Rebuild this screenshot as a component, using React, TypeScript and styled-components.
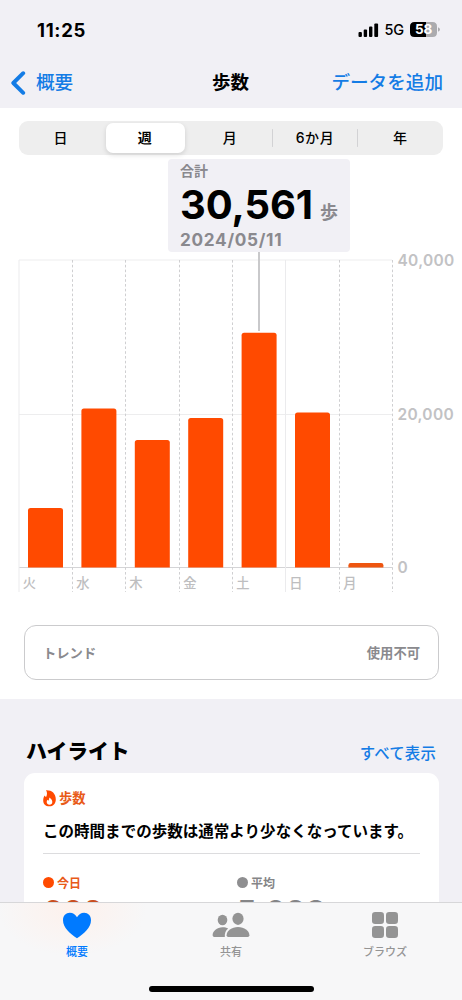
import React from 'react';
import styled, { createGlobalStyle } from 'styled-components';

const Global = createGlobalStyle`
  * { box-sizing: border-box; }
  html, body { margin: 0; padding: 0; }
  body {
    background: #f1f0f5;
    color: #000;
    font-family: Inter, "Noto Sans CJK JP", sans-serif;
  }
`;

const ORANGE = '#ff4a00';
const BLUE = '#147ce5';

const Screen = styled.div`
  position: relative;
  width: 462px;
  height: 1000px;
  overflow: hidden;
  background: #f1f0f5;
`;

const StatusBar = styled.div`
  height: 58px;
  padding: 1px 22px 0 37px;
  display: flex;
  align-items: center;
  justify-content: space-between;
`;

const Clock = styled.span`
  font-size: 18.5px;
  font-weight: 700;
  letter-spacing: 0.7px;
`;

const StatusIcons = styled.div`
  display: flex;
  align-items: center;
  gap: 6px;
`;

const Network = styled.span`
  font-size: 14.5px;
  font-weight: 500;
  line-height: 16px;
  letter-spacing: -0.2px;
`;

const NavBar = styled.div`
  height: 50px;
  padding: 0 19px 1px 10px;
  display: grid;
  grid-template-columns: 1fr auto 1fr;
  align-items: center;
  font-size: 18.6px;
  line-height: 29px;
  font-weight: 500;
  color: ${BLUE};
`;

const BackLink = styled.div`
  display: flex;
  align-items: center;
  gap: 10px;
`;

const Title = styled.h1`
  margin: 0 0 0 8px;
  color: #000;
  font-size: 18.5px;
  font-weight: 700;
`;

const AddData = styled.div`
  text-align: right;
  white-space: nowrap;
`;

const Panel = styled.section`
  position: relative;
  height: 591px;
  padding-top: 13px;
  background: #fff;
`;

const Segments = styled.div`
  display: grid;
  grid-template-columns: 83.5px 85px 85px 85px 1fr;
  width: 424px;
  height: 34px;
  margin-left: 19px;
  padding: 2px 0;
  border-radius: 9px;
  background: #eeeeee;
`;

const Segment = styled.div<{ $selected?: boolean; $divider?: boolean }>`
  display: flex;
  align-items: center;
  justify-content: center;
  margin: ${p => (p.$selected ? '0 3px' : '0')};
  border-radius: 7px;
  background: ${p =>
    p.$selected
      ? '#fff'
      : p.$divider
        ? 'linear-gradient(#d2d2d4, #d2d2d4) right center / 1px 18px no-repeat'
        : 'transparent'};
  box-shadow: ${p => (p.$selected ? '0 2px 5px rgba(0,0,0,.13)' : 'none')};
  font-size: 14px;
  font-weight: ${p => (p.$selected ? 700 : 500)};
  line-height: 20px;
  letter-spacing: 0.6px;
`;

const Chart = styled.svg`
  display: block;
  width: 462px;
  height: 350px;
  margin: 95px 0 -1px;
`;

const Callout = styled.div`
  position: absolute;
  left: 168px;
  top: 51px;
  width: 182px;
  height: 93px;
  padding: 3px 12px 0;
  border-radius: 4px;
  background: #f1f0f5;
  color: #8a898e;
  font-weight: 700;
`;

const CalloutLabel = styled.div`
  font-size: 14px;
  line-height: 18px;
  font-weight: 700;
`;

const CalloutValue = styled.div`
  display: flex;
  align-items: baseline;
  gap: 7px;
  height: 50px;
  line-height: 50px;
  font-size: 18px;
  font-weight: 700;
  white-space: nowrap;
`;

const BigNumber = styled.span`
  color: #000;
  font-size: 40px;
  font-weight: 700;
  letter-spacing: -0.1px;
`;

const CalloutDate = styled.div`
  font-size: 17.2px;
  line-height: 20px;
  letter-spacing: 0.7px;
`;

const Trend = styled.div`
  display: flex;
  align-items: center;
  justify-content: space-between;
  width: 415px;
  height: 55px;
  margin: 26px 0 0 24px;
  padding: 0 18px;
  border: 1px solid #cbcbcd;
  border-radius: 12px;
  color: #8a8a8e;
  font-size: 13.3px;
  font-weight: 700;
`;

const HighlightHeader = styled.div`
  display: flex;
  align-items: center;
  justify-content: space-between;
  height: 74px;
  padding: 31px 26px 0;
`;

const HighlightTitle = styled.h2`
  margin: 0;
  font-size: 20.8px;
  line-height: 31px;
  font-weight: 800;
`;

const ShowAll = styled.span`
  color: ${BLUE};
  font-size: 15.4px;
  font-weight: 500;
  letter-spacing: 0.2px;
`;

const Card = styled.article`
  width: 415px;
  height: 300px;
  margin-left: 24px;
  padding: 14px 19px;
  border-radius: 11px;
  background: #fff;
`;

const CardTag = styled.div`
  display: flex;
  align-items: center;
  gap: 3px;
  height: 22px;
  color: #e85a18;
  font-size: 13.3px;
  line-height: 20px;
  font-weight: 700;
`;

const Message = styled.p`
  margin: 9px 0 0;
  height: 36px;
  border-bottom: 1px solid #dcdcde;
  font-size: 15.5px;
  line-height: 28px;
  font-weight: 700;
  letter-spacing: 0.03px;
  white-space: nowrap;
`;

const Stats = styled.div`
  display: grid;
  grid-template-columns: 194px 1fr;
  padding-top: 17px;
`;

const Legend = styled.div<{ $color: string }>`
  display: flex;
  align-items: center;
  gap: 3px;
  height: 22px;
  color: ${p => p.$color};
  font-size: 12px;
  font-weight: 700;
`;

const Dot = styled.span<{ $color: string }>`
  width: 11px;
  height: 11px;
  border-radius: 50%;
  background: ${p => p.$color};
`;

const StatValue = styled.div<{ $color: string }>`
  color: ${p => p.$color};
  font-size: 30px;
  line-height: 36px;
  font-weight: 700;
  letter-spacing: 0.4px;
`;

const TabBar = styled.nav`
  position: absolute;
  left: 0;
  right: 0;
  bottom: 0;
  height: 98px;
  display: grid;
  grid-template-columns: repeat(3, 1fr);
  padding-top: 6px;
  border-top: 1px solid #d7d7d9;
  background:
    radial-gradient(ellipse 75px 48px at 72px 5px, #fdf1ec, rgba(253, 241, 236, 0)),
    #f7f7f8;
`;

const Tab = styled.div<{ $active?: boolean }>`
  display: flex;
  flex-direction: column;
  align-items: center;
  color: ${p => (p.$active ? '#007aff' : '#949494')};
`;

const TabLabel = styled.span`
  margin-top: 3px;
  font-size: 11px;
  line-height: 18px;
  font-weight: 500;
`;

const HomeIndicator = styled.div`
  position: absolute;
  left: 149px;
  bottom: 8px;
  width: 165px;
  height: 6px;
  border-radius: 3px;
  background: #000;
`;

const days = [
  { day: '火', top: 508 },
  { day: '水', top: 408.5 },
  { day: '木', top: 440 },
  { day: '金', top: 418 },
  { day: '土', top: 332.7 },
  { day: '日', top: 412.5 },
  { day: '月', top: 563 },
];
const lines = [19, 72.5, 125.5, 179.5, 232.5, 285.5, 339.5, 392.5];
const BASE = 567.5;

function bar(x: number, top: number) {
  const r = Math.min(2.5, (BASE - top) / 2);
  return `M${x} ${BASE}V${top + r}q0-${r} ${r}-${r}h${35 - 2 * r}q${r} 0 ${r} ${r}V${BASE}z`;
}

function StepsChart() {
  return (
    <Chart viewBox="0 250 462 350">
      {[260, 414.5, 567.5].map((y, i) => (
        <path key={y} d={`M19 ${y}H392`} stroke={i === 2 ? '#d4d4d6' : '#ededee'} />
      ))}
      {lines.map((x, i) => {
        const solid = i === 0 || i === 5;
        return (
          <path
            key={x}
            d={`M${x} 260V592`}
            stroke={solid ? '#ebebed' : '#cfcfd1'}
            strokeDasharray={solid ? undefined : '2.6 2.2'}
          />
        );
      })}
      <path d="M259 250V331" stroke="#c9c9cb" strokeWidth="2" />
      {days.map((d, i) => (
        <path key={d.day} d={bar(28 + i * 53.4, d.top)} fill={i === 6 ? '#ee5510' : ORANGE} />
      ))}
      <g fill="#bebec0" fontSize="13.3" fontWeight="500">
        {days.map((d, i) => (
          <text key={d.day} x={lines[i] + 3.8} y="588">{d.day}</text>
        ))}
      </g>
      <g fill="#c2c2c4" fontSize="15.5" fontWeight="600" letterSpacing="0.3">
        <text x="397.5" y="265.5">40,000</text>
        <text x="397.5" y="420">20,000</text>
        <text x="397.5" y="573">0</text>
      </g>
    </Chart>
  );
}

export default function App() {
  return (
    <Screen>
      <Global />
      <StatusBar>
        <Clock>11:25</Clock>
        <StatusIcons>
          <svg width="21" height="14" viewBox="0 0 21 14">
            <rect x="0.5" y="9" width="3.4" height="5" rx="1" />
            <rect x="5.7" y="6.5" width="3.4" height="7.5" rx="1" />
            <rect x="11" y="3.5" width="3.4" height="10.5" rx="1" />
            <rect x="16.3" y="0.5" width="3.8" height="13.5" rx="1" />
          </svg>
          <Network>5G</Network>
          <svg width="30" height="15" viewBox="0 0 30 15">
            <path d="M4.5 0H16V15H4.5Q0 15 0 10.5V4.5Q0 0 4.5 0Z" />
            <path d="M16 0H22.5Q27 0 27 4.5V10.5Q27 15 22.5 15H16Z" fill="#ababae" />
            <path d="M28 5.2Q30 6 30 7.5T28 9.8Z" fill="#ababae" />
            <text x="13.6" y="12.2" textAnchor="middle" fontSize="13.5" fontWeight="700" fill="#fff">58</text>
          </svg>
        </StatusIcons>
      </StatusBar>
      <NavBar>
        <BackLink>
          <svg width="16" height="24" viewBox="0 0 16 24" fill="none" stroke={BLUE} strokeWidth="3.9" strokeLinecap="round" strokeLinejoin="round">
            <path d="M13.2 2.2L3.3 12L13.2 21.8" />
          </svg>
          概要
        </BackLink>
        <Title>歩数</Title>
        <AddData>データを追加</AddData>
      </NavBar>

      <Panel>
        <Segments>
          <Segment>日</Segment>
          <Segment $selected>週</Segment>
          <Segment $divider>月</Segment>
          <Segment $divider>6か月</Segment>
          <Segment>年</Segment>
        </Segments>
        <StepsChart />
        <Callout>
          <CalloutLabel>合計</CalloutLabel>
          <CalloutValue><BigNumber>30,561</BigNumber>歩</CalloutValue>
          <CalloutDate>2024/05/11</CalloutDate>
        </Callout>
        <Trend>
          <span>トレンド</span>
          <span>使用不可</span>
        </Trend>
      </Panel>

      <HighlightHeader>
        <HighlightTitle>ハイライト</HighlightTitle>
        <ShowAll>すべて表示</ShowAll>
      </HighlightHeader>
      <Card>
        <CardTag>
          <svg width="13" height="17" viewBox="0 0 13 17">
            <path d="M3 .3C8.5 0 12.8 3.3 12.8 9.4c0 4.2-2.6 6.9-6.4 6.9C2.6 16.3.2 13.9.2 10.4c0-2 .5-3.600 1.500-4.900.3.700.8 1.200 1.400 1.500C4.400 4.500 4.300 2.300 3 .3Z" fill={ORANGE} />
            <path d="M6.300 7.500C8.200 8.700 9.300 10.200 9.300 11.900c0 1.700-1.200 2.800-2.800 2.800s-2.800-1.100-2.800-2.700c0-.9.300-1.600.8-2.200.2.500.5.800.9.900.6-.9.900-2 .9-3.200Z" fill="#fff" />
          </svg>
          歩数
        </CardTag>
        <Message>この時間までの歩数は通常より少なくなっています。</Message>
        <Stats>
          <div>
            <Legend $color="#e85a18"><Dot $color={ORANGE} />今日</Legend>
            <StatValue $color="#c94f22">609</StatValue>
          </div>
          <div>
            <Legend $color="#858587"><Dot $color="#8e8e90" />平均</Legend>
            <StatValue $color="#858587">5,098</StatValue>
          </div>
        </Stats>
      </Card>

      <TabBar>
        <Tab $active>
          <svg width="30" height="31" viewBox="0 0 30 31" fill="currentColor">
            <path d="M15 29.3C8 24.5 1 18.700 1 11.200 1 6.500 4 3.700 7.800 3.700c3.200 0 5.700 1.700 7.200 4.600 1.500-2.900 4-4.600 7.200-4.600 3.800 0 6.800 2.800 6.800 7.500 0 7.500-7 13.300-14 18.100Z" />
          </svg>
          <TabLabel>概要</TabLabel>
        </Tab>
        <Tab>
          <svg width="38" height="31" viewBox="0 0 38 31" fill="currentColor">
            <ellipse cx="10.5" cy="11" rx="4.8" ry="5.2" />
            <ellipse cx="26" cy="9.8" rx="5.6" ry="6.1" />
            <path d="M2.3 28Q.6 28 .6 26.3C.6 22 5 18.2 10.5 18.2c2.2 0 4.200.5 5.700 1.400C13.700 21.500 12.600 24 12.800 28Z" />
            <path d="M16.200 28Q14.600 28 14.600 26.300C14.600 21.800 19.700 18 26 18s11.400 3.800 11.400 8.300Q37.400 28 35.700 28Z" />
          </svg>
          <TabLabel>共有</TabLabel>
        </Tab>
        <Tab>
          <svg width="28" height="31" viewBox="0 0 28 31" fill="currentColor">
            <rect x="1" y="3" width="12" height="12" rx="3.2" />
            <rect x="15" y="3" width="12" height="12" rx="3.2" />
            <rect x="1" y="17" width="12" height="12" rx="3.2" />
            <rect x="15" y="17" width="12" height="12" rx="3.2" />
          </svg>
          <TabLabel>ブラウズ</TabLabel>
        </Tab>
        <HomeIndicator />
      </TabBar>
    </Screen>
  );
}
